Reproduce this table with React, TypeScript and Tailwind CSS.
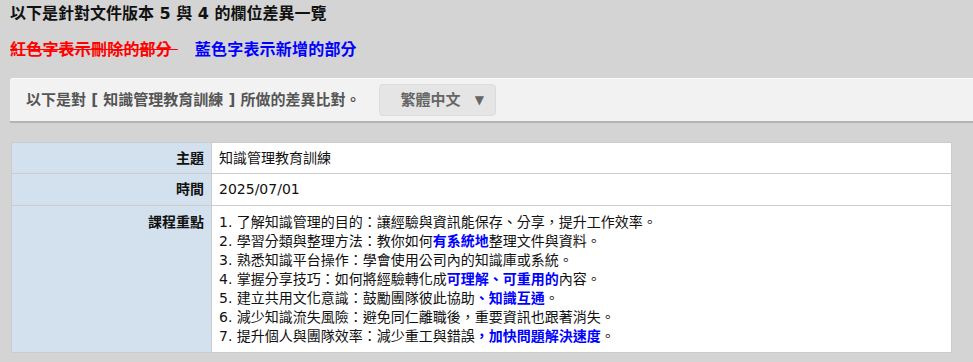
const font = { fontFamily: '"DejaVu Sans", "Noto Sans CJK TC", sans-serif' };

type Part = { text: string; added?: boolean };

const points: Part[][] = [
  [{ text: "1. 了解知識管理的目的：讓經驗與資訊能保存、分享，提升工作效率。" }],
  [
    { text: "2. 學習分類與整理方法：教你如何" },
    { text: "有系統地", added: true },
    { text: "整理文件與資料。" },
  ],
  [{ text: "3. 熟悉知識平台操作：學會使用公司內的知識庫或系統。" }],
  [
    { text: "4. 掌握分享技巧：如何將經驗轉化成" },
    { text: "可理解、可重用的", added: true },
    { text: "內容。" },
  ],
  [
    { text: "5. 建立共用文化意識：鼓勵團隊彼此協助" },
    { text: "、知識互通", added: true },
    { text: "。" },
  ],
  [{ text: "6. 減少知識流失風險：避免同仁離職後，重要資訊也跟著消失。" }],
  [
    { text: "7. 提升個人與團隊效率：減少重工與錯誤" },
    { text: "，加快問題解決速度", added: true },
    { text: "。" },
  ],
];

function Label({ children }: { children: React.ReactNode }) {
  return (
    <th className="w-[200px] border border-[#cccccc] bg-[#d3e1ee] pr-[7px] text-right align-top text-[14px] font-bold leading-[19px] text-[#111]">
      {children}
    </th>
  );
}

export default function App() {
  return (
    <div className="min-h-[362px] bg-[#d4d4d4] pb-4" style={font}>
      {/* page heading */}
      <div className="px-[10px] pt-[4px] text-[16px] font-bold leading-[20px] text-[#111]">
        以下是針對文件版本 5 與 4 的欄位差異一覽
      </div>

      {/* legend */}
      <div className="mt-[16px] flex gap-[17px] px-[10px] text-[16px] font-bold leading-[20px] tracking-[0.2px]">
        <span className="text-[#ff0000] line-through">紅色字表示刪除的部分{"\u00a0"}</span>
        <span className="text-[#0000ff]">藍色字表示新增的部分</span>
      </div>

      {/* toolbar */}
      <div className="ml-[10px] mt-[18px] flex h-[45px] items-center gap-[18px] rounded-tl-[3px] border-t border-b-2 border-t-[#fafafa] border-b-[#b3b3b3] bg-[#f2f2f2] pl-[16px]">
        <span className="text-[15px] font-bold text-[#555]">
          以下是對 [ 知識管理教育訓練 ] 所做的差異比對。
        </span>
        <button
          type="button"
          className="flex h-[32px] w-[117px] items-center gap-[14px] rounded-[4px] border border-[#dcdcdc] bg-[#e5e5e5] pl-[21px] text-[15px] font-bold text-[#666]"
        >
          <span>繁體中文</span>
          <span className="text-[12px]">▼</span>
        </button>
      </div>

      {/* diff table */}
      <table className="ml-[11px] mt-[19px] w-[941px] border-collapse bg-white">
        <tbody>
          <tr className="h-[31px]">
            <Label>
              <div className="pt-[6px]">主題</div>
            </Label>
            <td className="border border-[#cccccc] px-[7px] text-[14px] leading-[19px] text-[#111]">
              知識管理教育訓練
            </td>
          </tr>
          <tr className="h-[32px]">
            <Label>
              <div className="pt-[6px]">時間</div>
            </Label>
            <td className="border border-[#cccccc] px-[7px] text-[14px] leading-[19px] text-[#111]">
              2025/07/01
            </td>
          </tr>
          <tr>
            <Label>
              <div className="pt-[7px]">課程重點</div>
            </Label>
            <td className="border border-[#cccccc] px-[7px] pt-[7px] pb-[6px] text-[14px] leading-[19px] text-[#111]">
              {points.map((line, i) => (
                <div key={i}>
                  {line.map((p, j) =>
                    p.added ? (
                      <span key={j} className="font-bold text-[#0000ff]">
                        {p.text}
                      </span>
                    ) : (
                      <span key={j}>{p.text}</span>
                    )
                  )}
                </div>
              ))}
            </td>
          </tr>
        </tbody>
      </table>
    </div>
  );
}
